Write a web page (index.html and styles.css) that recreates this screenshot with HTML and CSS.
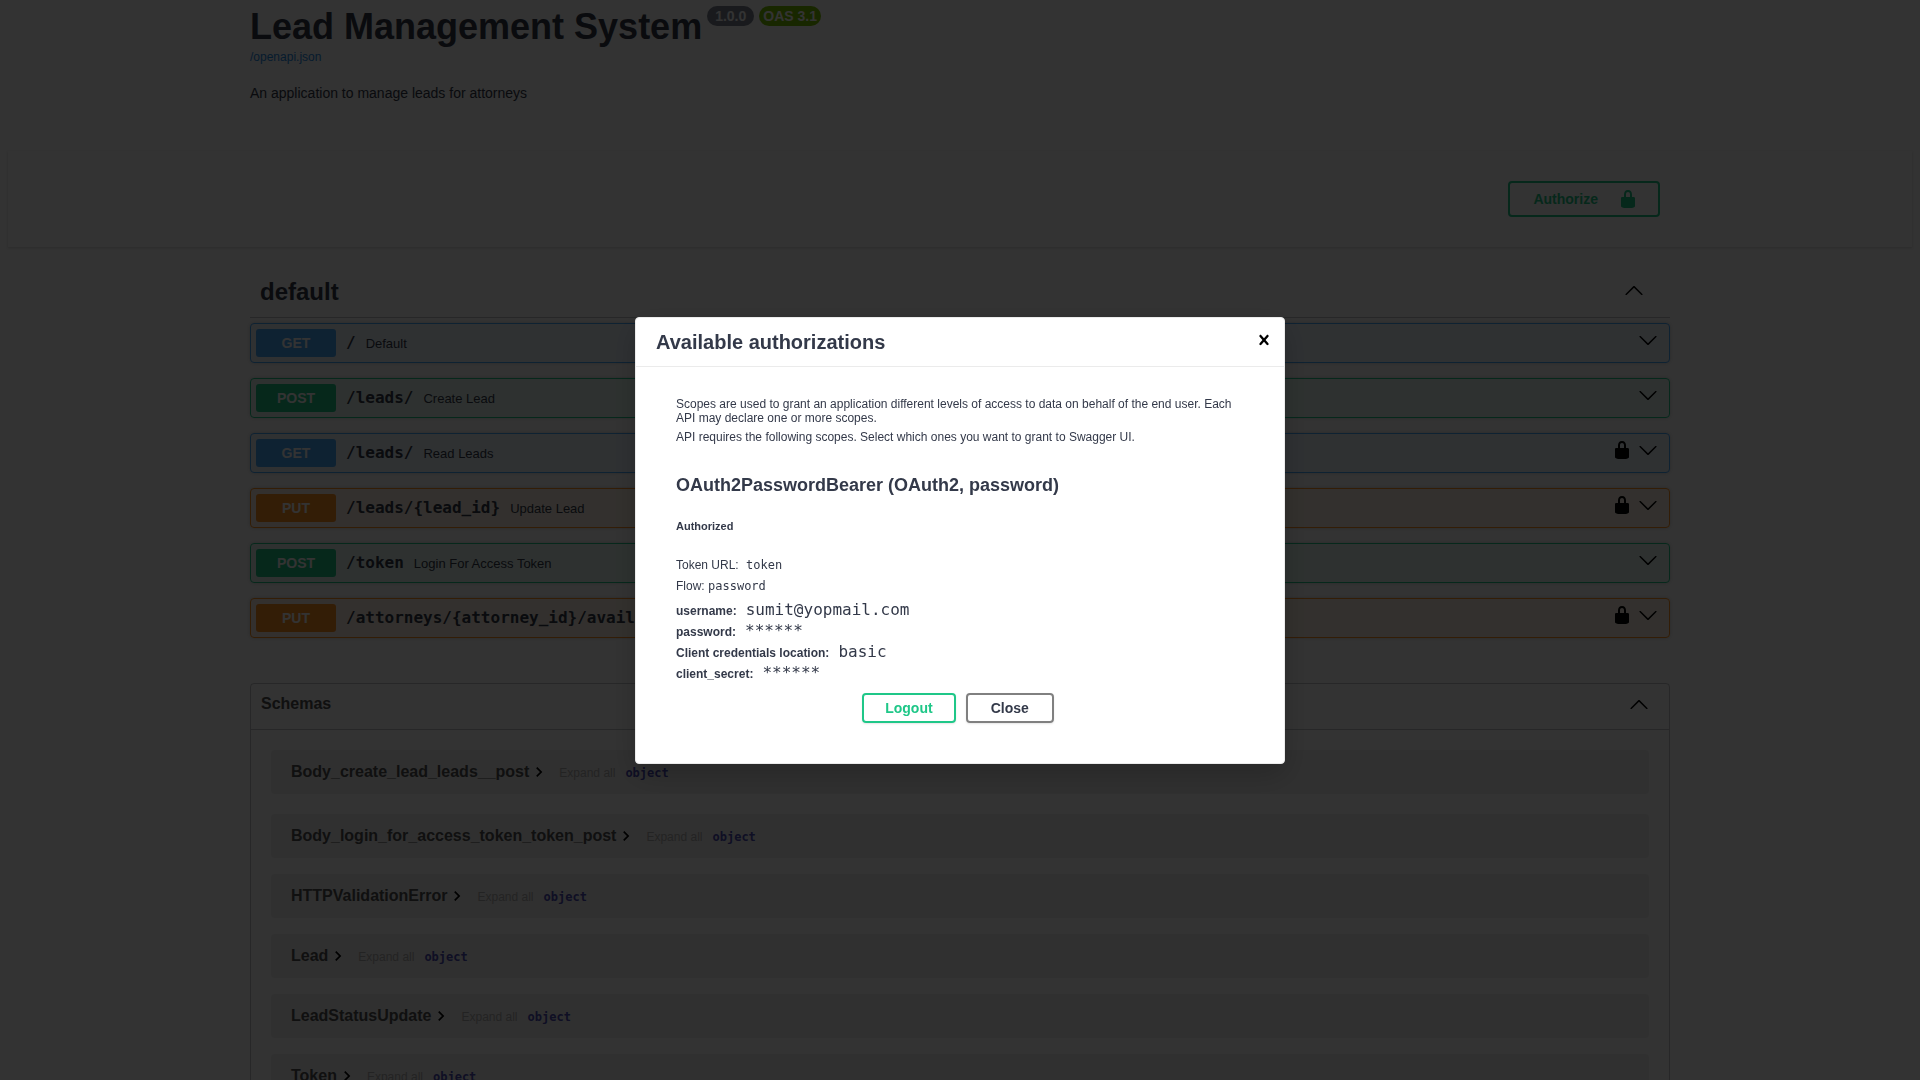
FILE: index.html
```
<!DOCTYPE html>
<html lang="en">
<head>
<meta charset="utf-8">
<meta name="viewport" content="width=device-width, initial-scale=1">
<title>Lead Management System - Swagger UI</title>
<link rel="stylesheet" href="styles.css">
</head>
<body>
<svg class="sprite" aria-hidden="true">
  <symbol id="lock" viewBox="0 0 20 20"><path d="M15.8 8H14V5.6C14 2.703 12.665 1 10 1 7.334 1 6 2.703 6 5.6V8H4c-.553 0-1 .646-1 1.199V17c0 .549.428 1.139.951 1.307l1.197.387C5.672 18.861 6.55 19 7.1 19h5.8c.549 0 1.428-.139 1.951-.307l1.196-.387c.524-.167.953-.757.953-1.306V9.199C17 8.646 16.352 8 15.8 8zM12 8H8V5.199C8 3.754 8.797 3 10 3c1.203 0 2 .754 2 2.199V8z"/></symbol>
  <symbol id="up" viewBox="0 0 20 20"><path d="M17.418 14.908c.272.268.709.268.979 0s.271-.701 0-.969l-7.908-7.83c-.27-.268-.707-.268-.979 0l-7.908 7.83c-.27.268-.27.701 0 .969.271.268.709.268.979 0L10 7.767l7.418 7.141z"/></symbol>
  <symbol id="down" viewBox="0 0 20 20"><path d="M17.418 6.109c.272-.268.709-.268.979 0s.271.701 0 .969l-7.908 7.83c-.27.268-.707.268-.979 0l-7.908-7.83c-.27-.268-.27-.701 0-.969.271-.268.709-.268.979 0L10 13.25l7.418-7.141z"/></symbol>
  <symbol id="right" viewBox="0 0 24 24"><path d="M10 6L8.59 7.41 13.17 12l-4.58 4.59L10 18l6-6z"/></symbol>
  <symbol id="cross" viewBox="0 0 20 20"><path d="M14.348 14.849c-.469.469-1.229.469-1.697 0L10 11.819l-2.651 3.029c-.469.469-1.229.469-1.697 0-.469-.469-.469-1.229 0-1.697l2.758-3.15-2.759-3.152c-.469-.469-.469-1.228 0-1.697.469-.469 1.228-.469 1.697 0L10 8.183l2.651-3.031c.469-.469 1.228-.469 1.697 0 .469.469.469 1.229 0 1.697l-2.758 3.152 2.758 3.15c.469.469.469 1.229 0 1.698z"/></symbol>
</svg>

<div class="page">
  <header class="wrapper info">
    <div class="title-row">
      <h1 class="title">Lead Management System</h1>
      <span class="badge version">1.0.0</span>
      <span class="badge oas">OAS 3.1</span>
    </div>
    <a class="spec-link" href="/openapi.json">/openapi.json</a>
    <p class="description">An application to manage leads for attorneys</p>
  </header>

  <div class="schemes">
    <div class="wrapper schemes-inner">
      <button class="btn authorize" type="button">Authorize <svg class="icon"><use href="#lock"/></svg></button>
    </div>
  </div>

  <main class="wrapper">
    <section class="tag">
      <div class="tag-header">
        <h2 class="tag-name">default</h2>
        <button class="icon-btn raised" type="button" aria-label="Collapse operations"><svg class="icon"><use href="#up"/></svg></button>
      </div>
      <div class="ops">
        <div class="op get">
          <span class="method">GET</span><span class="path">/</span><span class="summary">Default</span>
          <span class="op-icons"><button class="icon-btn" type="button" aria-label="Expand get /"><svg class="icon"><use href="#down"/></svg></button></span>
        </div>
        <div class="op post">
          <span class="method">POST</span><span class="path">/leads/</span><span class="summary">Create Lead</span>
          <span class="op-icons"><button class="icon-btn" type="button" aria-label="Expand post /leads/"><svg class="icon"><use href="#down"/></svg></button></span>
        </div>
        <div class="op get">
          <span class="method">GET</span><span class="path">/leads/</span><span class="summary">Read Leads</span>
          <span class="op-icons"><button class="icon-btn" type="button" aria-label="Authorization"><svg class="icon"><use href="#lock"/></svg></button><button class="icon-btn" type="button" aria-label="Expand get /leads/"><svg class="icon"><use href="#down"/></svg></button></span>
        </div>
        <div class="op put">
          <span class="method">PUT</span><span class="path">/leads/{lead_id}</span><span class="summary">Update Lead</span>
          <span class="op-icons"><button class="icon-btn" type="button" aria-label="Authorization"><svg class="icon"><use href="#lock"/></svg></button><button class="icon-btn" type="button" aria-label="Expand put /leads/{lead_id}"><svg class="icon"><use href="#down"/></svg></button></span>
        </div>
        <div class="op post">
          <span class="method">POST</span><span class="path">/token</span><span class="summary">Login For Access Token</span>
          <span class="op-icons"><button class="icon-btn" type="button" aria-label="Expand post /token"><svg class="icon"><use href="#down"/></svg></button></span>
        </div>
        <div class="op put">
          <span class="method">PUT</span><span class="path">/attorneys/{attorney_id}/avail</span>
          <span class="op-icons"><button class="icon-btn" type="button" aria-label="Authorization"><svg class="icon"><use href="#lock"/></svg></button><button class="icon-btn" type="button" aria-label="Expand put attorneys"><svg class="icon"><use href="#down"/></svg></button></span>
        </div>
      </div>
    </section>

    <section class="schemas">
      <div class="schemas-header">
        <h3 class="schemas-title">Schemas</h3>
        <button class="icon-btn" type="button" aria-label="Collapse schemas"><svg class="icon"><use href="#up"/></svg></button>
      </div>
      <div class="schema-list">
        <article class="schema first"><button class="schema-name" type="button">Body_create_lead_leads__post<svg class="icon"><use href="#right"/></svg></button><button class="expand" type="button">Expand all</button><span class="type">object</span></article>
        <article class="schema"><button class="schema-name" type="button">Body_login_for_access_token_token_post<svg class="icon"><use href="#right"/></svg></button><button class="expand" type="button">Expand all</button><span class="type">object</span></article>
        <article class="schema"><button class="schema-name" type="button">HTTPValidationError<svg class="icon"><use href="#right"/></svg></button><button class="expand" type="button">Expand all</button><span class="type">object</span></article>
        <article class="schema"><button class="schema-name" type="button">Lead<svg class="icon"><use href="#right"/></svg></button><button class="expand" type="button">Expand all</button><span class="type">object</span></article>
        <article class="schema"><button class="schema-name" type="button">LeadStatusUpdate<svg class="icon"><use href="#right"/></svg></button><button class="expand" type="button">Expand all</button><span class="type">object</span></article>
        <article class="schema"><button class="schema-name" type="button">Token<svg class="icon"><use href="#right"/></svg></button><button class="expand" type="button">Expand all</button><span class="type">object</span></article>
      </div>
    </section>
  </main>
</div>

<div class="backdrop">
  <div class="modal" role="dialog" aria-modal="true" aria-labelledby="modal-title">
    <div class="modal-header">
      <h3 class="modal-title" id="modal-title">Available authorizations</h3>
      <button class="icon-btn raised" type="button" aria-label="Close dialog"><svg class="icon"><use href="#cross"/></svg></button>
    </div>
    <div class="modal-body">
      <p class="scope-text">Scopes are used to grant an application different levels of access to data on behalf of the end user. Each API may declare one or more scopes.</p>
      <p class="scope-text">API requires the following scopes. Select which ones you want to grant to Swagger UI.</p>
      <h4 class="scheme-name">OAuth2PasswordBearer (OAuth2, password)</h4>
      <h6 class="status">Authorized</h6>
      <p class="flow">Token URL: <code class="url">token</code></p>
      <p class="flow">Flow: <code>password</code></p>
      <dl class="credentials">
        <div class="row"><dt>username:</dt><dd>sumit@yopmail.com</dd></div>
        <div class="row"><dt>password:</dt><dd>******</dd></div>
        <div class="row"><dt>Client credentials location:</dt><dd>basic</dd></div>
        <div class="row"><dt>client_secret:</dt><dd>******</dd></div>
      </dl>
      <div class="actions">
        <button class="btn logout" type="button">Logout</button>
        <button class="btn" type="button">Close</button>
      </div>
    </div>
  </div>
</div>
</body>
</html>
```
FILE: styles.css
```
* { box-sizing: border-box; }

html { height: 100%; overflow: hidden; }

body {
  height: 100%;
  margin: 0;
  overflow: hidden;
  background: #fcfcfc;
  color: #333949;
  font-family: "Liberation Sans", Arial, sans-serif;
}

h1, h2, h3, h4, h6, p, dl, dd { margin: 0; }

button {
  padding: 0;
  border: 0;
  background: none;
  color: inherit;
  font-family: inherit;
  cursor: pointer;
}

.sprite { display: none; }
.icon { display: block; width: 20px; height: 20px; fill: currentColor; }
.icon-btn { color: #000; }
.raised { padding-bottom: 4px; }

.page { padding: 0 8px; }
.wrapper { width: 100%; max-width: 1460px; margin: 0 auto; padding: 0 20px; }

.info { padding-top: 6px; padding-bottom: 49px; }
.title-row { display: flex; align-items: flex-start; gap: 5px; }
.title { font-size: 36px; line-height: 42px; }
.badge {
  height: 20px;
  border-radius: 10px;
  color: #fff;
  font-size: 14px;
  font-weight: 700;
  line-height: 20px;
}
.version { padding: 0 8px; background: #7d8492; }
.oas { padding: 0 4px; background: #7bc000; }
.spec-link { display: block; color: #1f8ae5; font-size: 12px; line-height: 18px; text-decoration: none; }
.description { margin-top: 18px; font-size: 14px; line-height: 18px; }

.schemes { padding: 30px 0; background: #fcfcfc; box-shadow: 0 1px 2px rgba(0, 0, 0, .15); }
.schemes-inner { display: flex; justify-content: flex-end; padding-right: 30px; }

.btn {
  padding: 5px 23px;
  border: 2px solid gray;
  border-radius: 4px;
  box-shadow: 0 1px 2px rgba(0, 0, 0, .1);
  color: #333949;
  font-size: 14px;
  font-weight: 700;
  line-height: 16px;
}
.authorize { display: flex; align-items: center; gap: 20px; height: 36px; padding: 0 20px 0 23px; border-color: #1fc788; color: #1fc788; box-shadow: none; }
.logout { padding: 5px 21px; border-color: #1fc788; color: #1fc788; }

.tag-header {
  display: flex;
  align-items: center;
  justify-content: space-between;
  margin-top: 20px;
  height: 51px;
  padding: 0 26px 0 10px;
  border-bottom: 1px solid rgba(59, 65, 81, .3);
}
.tag-name { font-size: 24px; line-height: 28px; }

.ops { display: grid; gap: 15px; padding-top: 5px; }
.op {
  display: flex;
  align-items: center;
  height: 40px;
  padding: 0 11px 0 5px;
  border: 1px solid;
  border-radius: 4px;
  box-shadow: 0 0 3px rgba(0, 0, 0, .19);
}
.get { border-color: #48a8f8; background: rgba(72, 168, 248, .1); }
.post { border-color: #1fc788; background: rgba(31, 199, 136, .1); }
.put { border-color: #fc8f20; background: rgba(252, 143, 32, .1); }
.method {
  width: 80px;
  border-radius: 3px;
  color: #fff;
  font-size: 14px;
  font-weight: 700;
  line-height: 28px;
  text-align: center;
}
.get .method { background: #48a8f8; }
.post .method { background: #1fc788; }
.put .method { background: #fc8f20; }
.path { padding: 0 10px; font-family: "DejaVu Sans Mono", monospace; font-size: 16px; font-weight: 700; line-height: 20px; }
.summary { font-size: 13px; }
.op-icons { display: flex; gap: 6px; margin-left: auto; padding-bottom: 6px; }

.schemas { margin-top: 45px; border: 1px solid rgba(59, 65, 81, .3); border-radius: 4px; }
.schemas-header {
  display: flex;
  align-items: center;
  justify-content: space-between;
  height: 46px;
  padding: 0 20px 5px 10px;
  border-bottom: 1px solid rgba(59, 65, 81, .3);
}
.schemas-title { color: #505050; font-size: 16px; line-height: 20px; }
.schema-list { display: grid; gap: 16px; padding: 20px; }
.schema {
  display: flex;
  align-items: center;
  height: 44px;
  padding: 0 20px;
  border-radius: 4px;
  background: rgba(0, 0, 0, .05);
}
.schema.first { margin-bottom: 4px; }
.schema-name { display: flex; align-items: center; color: #505050; font-size: 16px; font-weight: 700; line-height: 20px; }
.schema-name .icon { color: #000; }
.expand, .type { margin-left: 10px; padding-top: 2px; font-size: 12px; line-height: 20px; }
.expand { color: #afaeae; }
.type { color: #4a4ab4; font-family: "DejaVu Sans Mono", monospace; font-weight: 700; }

/* Dialog layer over the page */
.backdrop {
  position: fixed;
  inset: 0;
  display: flex;
  align-items: center;
  justify-content: center;
  background: rgba(0, 0, 0, .8);
}
.modal {
  width: 90%;
  max-width: 650px;
  border: 1px solid #ebebeb;
  border-radius: 4px;
  background: #fff;
  box-shadow: 0 10px 30px rgba(0, 0, 0, .2);
}
.modal-header {
  display: flex;
  align-items: center;
  justify-content: space-between;
  height: 49px;
  padding: 0 10px 0 20px;
  border-bottom: 1px solid #ebebeb;
}
.modal-title { font-size: 20px; line-height: 24px; }
.modal-body { padding: 30px 40px 40px; }
.scope-text { margin-bottom: 5px; font-size: 12px; line-height: 14px; }
.scheme-name { margin-top: 30px; font-size: 18px; line-height: 22px; }
.status { margin: 23px 0 22px; font-size: 11px; line-height: 14px; }
.flow { font-size: 12px; line-height: 21px; }
code, dd { font-family: "DejaVu Sans Mono", monospace; }
code { font-size: 12px; }
.url { padding-left: 4px; }
.credentials { padding-top: 2px; }
.row { display: flex; align-items: baseline; gap: 9px; height: 21px; line-height: 21px; }
dt { font-size: 12px; font-weight: 700; }
dd { font-size: 16px; }
.actions { display: flex; justify-content: center; gap: 10px; padding: 10px 4px 0 0; }
```
